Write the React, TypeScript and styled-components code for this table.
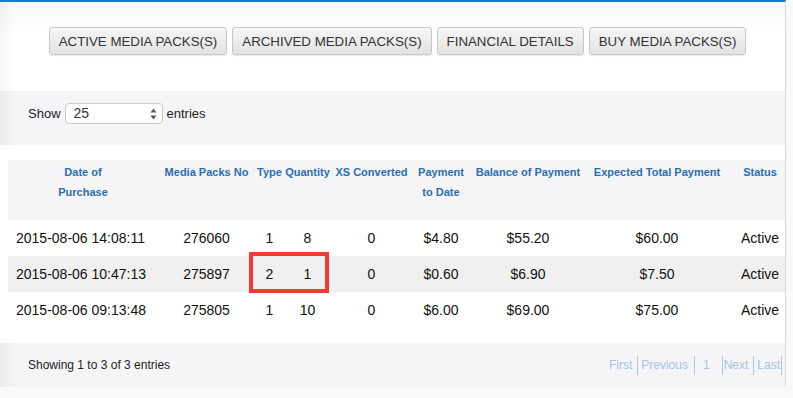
import React from 'react';
import styled, { createGlobalStyle } from 'styled-components';

const GlobalStyle = createGlobalStyle`
  html, body {
    margin: 0;
    padding: 0;
    background: #f9f9fa;
    font-family: "Liberation Sans", Arial, sans-serif;
  }
`;

type Pack = {
    date: string;
    no: string;
    type: string;
    qty: string;
    xs: string;
    paid: string;
    balance: string;
    total: string;
    status: string;
};

const packs: Pack[] = [
    { date: '2015-08-06 14:08:11', no: '276060', type: '1', qty: '8', xs: '0', paid: '$4.80', balance: '$55.20', total: '$60.00', status: 'Active' },
    { date: '2015-08-06 10:47:13', no: '275897', type: '2', qty: '1', xs: '0', paid: '$0.60', balance: '$6.90', total: '$7.50', status: 'Active' },
    { date: '2015-08-06 09:13:48', no: '275805', type: '1', qty: '10', xs: '0', paid: '$6.00', balance: '$69.00', total: '$75.00', status: 'Active' },
];

const columns = [
    { title: <>Date of<br/>Purchase</>, width: 150 },
    { title: 'Media Packs No', width: 97 },
    { title: 'Type', width: 29 },
    { title: 'Quantity', width: 47 },
    { title: 'XS Converted', width: 81 },
    { title: <>Payment<br/>to Date</>, width: 58 },
    { title: 'Balance of Payment', width: 116 },
    { title: 'Expected Total Payment', width: 142 },
    { title: 'Status', width: 64 },
];

export default function App() {
    return (
        <>
            <GlobalStyle/>
            <Panel>
                <Toolbar>
                    <TabButton>Active Media Packs(s)</TabButton>
                    <TabButton>Archived Media Packs(s)</TabButton>
                    <TabButton>Financial Details</TabButton>
                    <TabButton>Buy Media Packs(s)</TabButton>
                </Toolbar>

                <LengthBar>
                    Show
                    <SelectBox>
                        <span>25</span>
                        <svg width="7" height="12" viewBox="0 0 7 12">
                            <path d="M3.5 0.5 L6.5 4.5 L0.5 4.5 Z" fill="#555"/>
                            <path d="M3.5 11.5 L6.5 7.5 L0.5 7.5 Z" fill="#555"/>
                        </svg>
                    </SelectBox>
                    entries
                </LengthBar>

                <TableWrap>
                    <Table>
                        <colgroup>
                            {columns.map((c, i) => <col key={i} style={{ width: c.width }}/>)}
                        </colgroup>
                        <thead>
                            <tr>
                                {columns.map((c, i) => <Th key={i}>{c.title}</Th>)}
                            </tr>
                        </thead>
                        <tbody>
                            {packs.map((p, i) => (
                                <Row key={p.no} $striped={i % 2 === 1}>
                                    <Td $left>{p.date}</Td>
                                    <Td>{p.no}</Td>
                                    <Td>{p.type}</Td>
                                    <Td>{p.qty}</Td>
                                    <Td>{p.xs}</Td>
                                    <Td>{p.paid}</Td>
                                    <Td>{p.balance}</Td>
                                    <Td>{p.total}</Td>
                                    <Td>{p.status}</Td>
                                </Row>
                            ))}
                        </tbody>
                    </Table>
                    <Highlight/>
                </TableWrap>

                <Footer>
                    <span>Showing 1 to 3 of 3 entries</span>
                    <Pager>
                        <PageLink $pad="0 5px 0 0">First</PageLink>
                        <PageLink $pad="0 6px 0 3px">Previous</PageLink>
                        <PageLink $pad="0 12px 0 8px">1</PageLink>
                        <PageLink $pad="0 5px 0 1px">Next</PageLink>
                        <PageLink $pad="0 1px 0 3px">Last</PageLink>
                    </Pager>
                </Footer>
            </Panel>
        </>
    );
}

const Panel = styled.div`
  position: relative;
  width: 786px;
  height: 387px;
  overflow: hidden;
  border-top: 2px solid #1d7ac8;
  border-right: 1px solid #d6d6d8;
  background: #f5f5f7;
  box-shadow: inset 14px 0 14px -10px rgba(0, 0, 0, 0.06);
  box-sizing: border-box;
`;

const Toolbar = styled.div`
  height: 89px;
  display: flex;
  justify-content: center;
  align-items: flex-start;
  gap: 5px;
  padding: 25px 0 0 10px;
  box-sizing: border-box;
  background: linear-gradient(#f7f7f7, #ffffff 30px);
  box-shadow: inset 14px 0 14px -10px rgba(0, 0, 0, 0.05);
`;

const TabButton = styled.button`
  height: 28px;
  padding: 0 9px;
  border: 1px solid #c9c9c9;
  border-radius: 3px;
  background: linear-gradient(#f6f6f6, #e3e3e3);
  box-shadow: 0 1px 1px rgba(0, 0, 0, 0.08);
  color: #333;
  font-family: "Liberation Sans", Arial, sans-serif;
  font-size: 13.3px;
  text-transform: uppercase;
  white-space: nowrap;
  cursor: pointer;
`;

const LengthBar = styled.div`
  height: 54px;
  display: flex;
  align-items: flex-start;
  gap: 4px;
  padding: 12px 0 0 28px;
  box-sizing: border-box;
  font-size: 13px;
  line-height: 21px;
  color: #222;
`;

const SelectBox = styled.div`
  width: 98px;
  height: 21px;
  display: flex;
  align-items: center;
  justify-content: space-between;
  padding: 0 5px 0 8px;
  box-sizing: border-box;
  border: 1px solid #cacaca;
  border-radius: 4px;
  background: #fff;
  font-size: 14px;
  color: #333;
`;

const TableWrap = styled.div`
  position: relative;
  padding: 15px 0;
  background: #fff;
`;

const Table = styled.table`
  margin-left: 8px;
  width: 784px;
  table-layout: fixed;
  border-collapse: collapse;
`;

const Th = styled.th`
  height: 60px;
  padding: 2px 0 0;
  box-sizing: border-box;
  vertical-align: top;
  background: #f5f5f7;
  color: #2a6db5;
  font-size: 11px;
  font-weight: bold;
  line-height: 20px;
  text-align: center;
  white-space: nowrap;
`;

const Row = styled.tr<{ $striped?: boolean }>`
  height: 36px;
  background: ${p => (p.$striped ? '#f0f0f0' : '#fff')};
`;

const Td = styled.td<{ $left?: boolean }>`
  padding: ${p => (p.$left ? '0 0 0 8px' : '0')};
  text-align: ${p => (p.$left ? 'left' : 'center')};
  font-size: 14px;
  color: #111;
  white-space: nowrap;
`;

const Highlight = styled.div`
  position: absolute;
  left: 249px;
  top: 107px;
  width: 80px;
  height: 41px;
  border: 4px solid #f23b30;
  box-sizing: border-box;
  pointer-events: none;
`;

const Footer = styled.div`
  height: 44px;
  display: flex;
  align-items: center;
  justify-content: space-between;
  padding: 0 3px 0 28px;
  box-sizing: border-box;
  font-size: 12px;
  color: #222;
`;

const Pager = styled.div`
  display: flex;
  align-items: center;
`;

const PageLink = styled.span<{ $pad: string }>`
  padding: ${p => p.$pad};
  line-height: 19px;
  border-right: 1px solid #a9c9e6;
  color: #a3c4e4;
  font-size: 12px;
`;
